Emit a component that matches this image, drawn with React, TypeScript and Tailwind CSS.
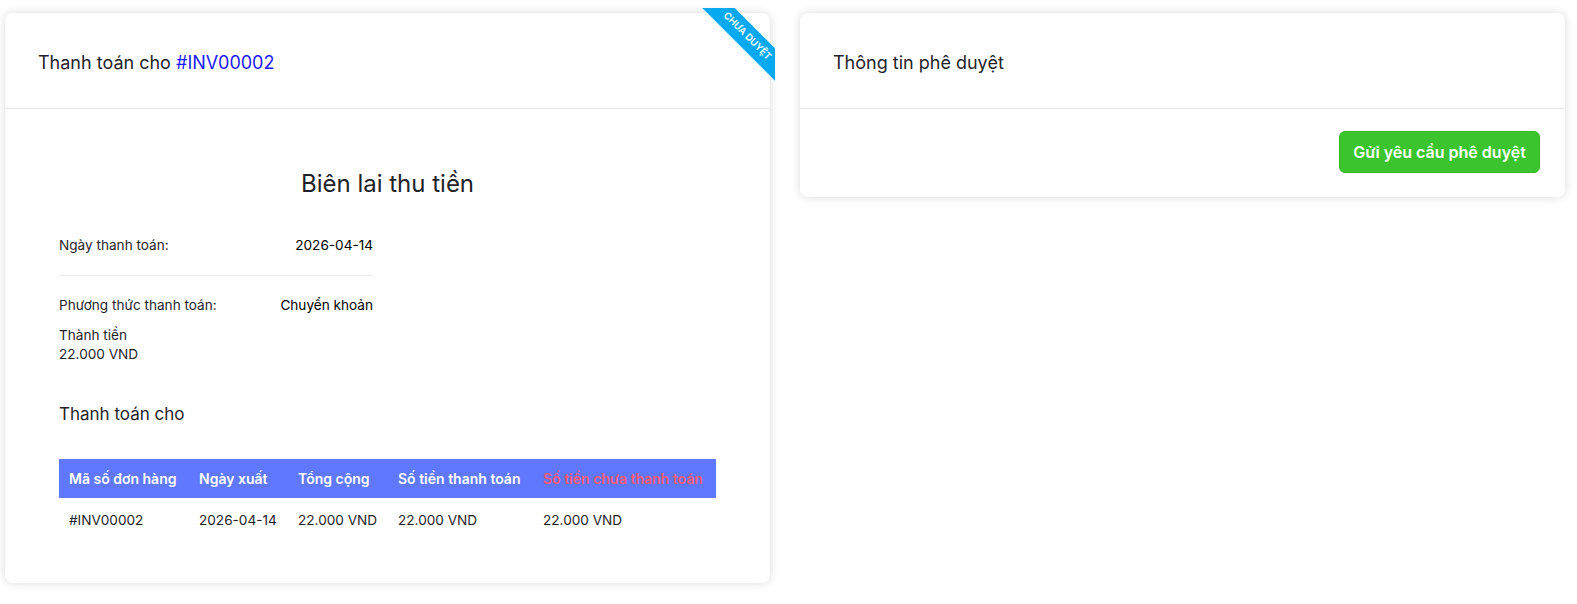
import React from 'react';

const rows = [
  { code: '#INV00002', date: '2026-04-14', total: '22.000 VND', paid: '22.000 VND', unpaid: '22.000 VND' },
];

const Ribbon: React.FC<{ label: string }> = ({ label }) => (
  <div className="absolute -top-[5px] -right-[5px] w-[73px] h-[75px] overflow-hidden pointer-events-none">
    <span className="absolute left-[-16px] top-[17px] w-[122px] h-[23px] rotate-45 bg-[#05a9f0] text-white text-[9.5px] font-semibold uppercase flex items-center justify-center">
      {label}
    </span>
  </div>
);

export default function App() {
  return (
    <div className="min-h-[604px] bg-white font-['Inter','Noto_Sans',sans-serif] text-[#1f2329]">
      <div className="grid grid-cols-2 gap-[30px] pl-[5px] pr-[12px] pt-[13px] items-start">
        {/* receipt card */}
        <div className="relative bg-white rounded-lg shadow-[0_0_10px_rgba(0,0,0,0.15)]">
          <Ribbon label="Chưa duyệt" />
          <div className="h-[96px] flex items-center pt-[3px] px-[33px] border-b border-[#e6e8eb]">
            <h2 className="text-[18px]">
              Thanh toán cho <span className="text-[#1b1bf5]">#INV00002</span>
            </h2>
          </div>
          <div className="px-[54px] pt-[59px] pb-[41px]">
            <h1 className="text-[24px] leading-[32px] text-center">Biên lai thu tiền</h1>

            <div className="w-[314px] mt-[35px] text-[13.6px]">
              <div className="flex justify-between leading-[20px] pb-[20px] border-b border-[#e9ebee]">
                <span>Ngày thanh toán:</span>
                <span className="text-black">2026-04-14</span>
              </div>
              <div className="flex justify-between leading-[20px] mt-[19px]">
                <span>Phương thức thanh toán:</span>
                <span className="text-black">Chuyển khoản</span>
              </div>
              <div className="mt-[11px] leading-[19px]">
                <div>Thành tiền</div>
                <div>22.000 VND</div>
              </div>
            </div>

            <h3 className="text-[17px] leading-[24px] mt-[38px]">Thanh toán cho</h3>

            <table className="w-full mt-[33px] text-[13.6px] text-left border-collapse">
              <thead className="bg-[#5f78ff] text-white">
                <tr className="h-[39px] text-[14px]">
                  <th className="px-[10px] font-semibold w-[130px]">Mã số đơn hàng</th>
                  <th className="px-[10px] font-semibold w-[99px]">Ngày xuất</th>
                  <th className="px-[10px] font-semibold w-[100px]">Tổng cộng</th>
                  <th className="px-[10px] font-semibold w-[145px]">Số tiền thanh toán</th>
                  <th className="px-[10px] font-semibold text-[#ff5b72]">Số tiền chưa thanh toán</th>
                </tr>
              </thead>
              <tbody>
                {rows.map((r) => (
                  <tr key={r.code} className="h-[44px]">
                    <td className="px-[10px]">{r.code}</td>
                    <td className="px-[10px]">{r.date}</td>
                    <td className="px-[10px]">{r.total}</td>
                    <td className="px-[10px]">{r.paid}</td>
                    <td className="px-[10px]">{r.unpaid}</td>
                  </tr>
                ))}
              </tbody>
            </table>
          </div>
        </div>

        {/* approval card */}
        <div className="bg-white rounded-lg shadow-[0_0_10px_rgba(0,0,0,0.15)]">
          <div className="h-[96px] flex items-center pt-[3px] px-[33px] border-b border-[#e6e8eb]">
            <h2 className="text-[18px]">Thông tin phê duyệt</h2>
          </div>
          <div className="flex justify-end px-[25px] pt-[22px] pb-[24px]">
            <button className="h-[42px] w-[201px] rounded-md bg-[#3bc42d] border border-[#36b829] text-white text-[16px] font-semibold">
              Gửi yêu cầu phê duyệt
            </button>
          </div>
        </div>
      </div>
    </div>
  );
}
